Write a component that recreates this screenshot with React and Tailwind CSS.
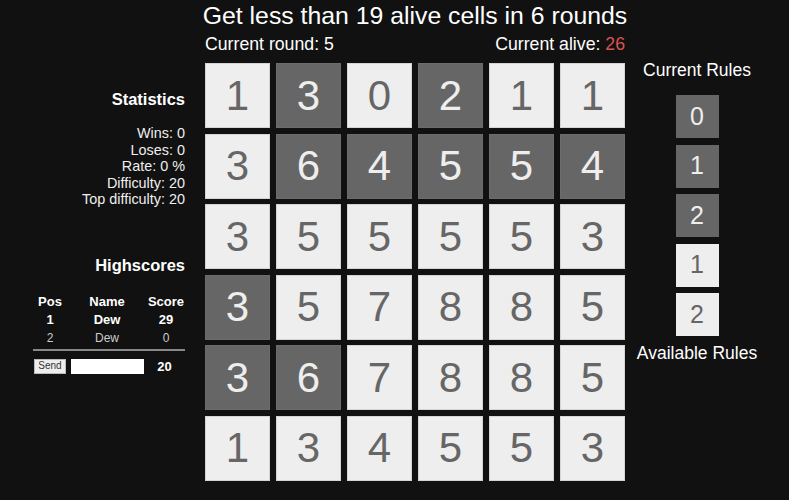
import React from "react";

const board = [
  [[1, 0], [3, 1], [0, 0], [2, 1], [1, 0], [1, 0]],
  [[3, 0], [6, 1], [4, 1], [5, 1], [5, 1], [4, 1]],
  [[3, 0], [5, 0], [5, 0], [5, 0], [5, 0], [3, 0]],
  [[3, 1], [5, 0], [7, 0], [8, 0], [8, 0], [5, 0]],
  [[3, 1], [6, 1], [7, 0], [8, 0], [8, 0], [5, 0]],
  [[1, 0], [3, 0], [4, 0], [5, 0], [5, 0], [3, 0]],
];

const rules = [
  [0, 1],
  [1, 1],
  [2, 1],
  [1, 0],
  [2, 0],
];

const stats = ["Wins: 0", "Loses: 0", "Rate: 0 %", "Difficulty: 20", "Top difficulty: 20"];

const Cell = ({ value, alive }) => (
  <div
    className={
      alive
        ? "w-[65px] h-[65px] flex items-center justify-center bg-[#666] text-[#eee] border border-[#6c6c6c] text-[42px] leading-none"
        : "w-[65px] h-[65px] flex items-center justify-center bg-[#eee] text-[#666] border border-[#d4d4d4] text-[42px] leading-none"
    }
  >
    {value}
  </div>
);

const App = () => {
  return (
    <section className="w-[789px] h-[500px] bg-[#111] text-white font-['Liberation_Sans',Arial,sans-serif] flex overflow-hidden">
      {/* LEFT: stats + highscores */}
      <div className="w-[185px] shrink-0 flex flex-col items-end text-right">
        <h2 className="mt-[89px] text-[16.5px] leading-[20px] font-bold">Statistics</h2>
        <div className="mt-[16px] text-[14.4px] leading-[16.5px] text-[#eee]">
          {stats.map((s) => (
            <p key={s}>{s}</p>
          ))}
        </div>
        <h2 className="mt-[47px] text-[16.5px] leading-[20px] font-bold">Highscores</h2>
        <div className="mt-[18px] w-[152px] text-[13px] text-center">
          <div className="grid grid-cols-[34px_80px_38px] leading-[18px] font-bold">
            <span>Pos</span>
            <span>Name</span>
            <span>Score</span>
          </div>
          <div className="grid grid-cols-[34px_80px_38px] leading-[18px] font-bold">
            <span>1</span>
            <span>Dew</span>
            <span>29</span>
          </div>
          <div className="grid grid-cols-[34px_80px_38px] leading-[18px] text-[12px] text-[#ccc]">
            <span>2</span>
            <span>Dew</span>
            <span>0</span>
          </div>
          <div className="mt-[2px] h-[2px] bg-[#888]"></div>
          <div className="mt-[6px] flex items-center">
            <button className="ml-[1px] w-[32px] h-[15px] bg-[#eee] border border-[#bbb] text-[#333] text-[10px] leading-none">
              Send
            </button>
            <div className="ml-[5px] w-[73px] h-[15px] bg-white"></div>
            <span className="flex-1 font-bold text-[13px]">20</span>
          </div>
        </div>
      </div>

      {/* MIDDLE: board */}
      <div className="ml-[20px] w-[420px] shrink-0 flex flex-col">
        <h1 className="-mx-[10px] mt-[2px] text-[24.8px] leading-[28px] text-center whitespace-nowrap">
          Get less than 19 alive cells in 6 rounds
        </h1>
        <div className="mt-[5px] flex justify-between text-[17.7px] leading-[19px]">
          <span>Current round: 5</span>
          <span>
            Current alive: <span className="text-[#d9534f]">26</span>
          </span>
        </div>
        <div className="mt-[9px] grid grid-cols-6 gap-x-[6px] gap-y-[5.6px] w-[420px]">
          {board.map((row, r) =>
            row.map(([v, a], c) => <Cell key={`${r}-${c}`} value={v} alive={a} />)
          )}
        </div>
      </div>

      {/* RIGHT: rules */}
      <div className="w-[134px] shrink-0 ml-[5px] flex flex-col items-center">
        <h3 className="mt-[60px] text-[17.5px] leading-[20px] whitespace-nowrap">Current Rules</h3>
        <div className="mt-[15px] flex flex-col gap-[6.5px]">
          {rules.map(([v, a], i) => (
            <div
              key={i}
              className={
                a
                  ? "w-[43px] h-[43px] flex items-center justify-center bg-[#666] text-[#eee] text-[25px]"
                  : "w-[43px] h-[43px] flex items-center justify-center bg-[#eee] text-[#666] text-[25px]"
              }
            >
              {v}
            </div>
          ))}
        </div>
        <h3 className="mt-[7px] text-[17.5px] leading-[20px] whitespace-nowrap">Available Rules</h3>
      </div>
    </section>
  );
};

export default App;
